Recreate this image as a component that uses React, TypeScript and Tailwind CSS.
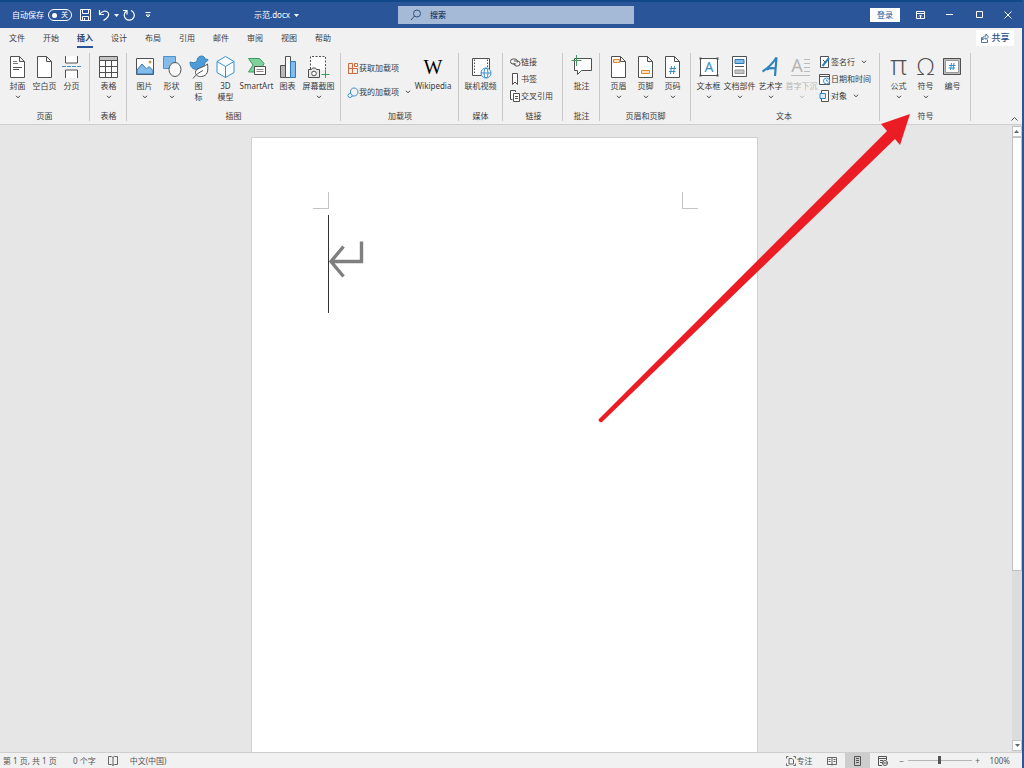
import { useState } from "react";
import type { ReactNode } from "react";

const INK = "#505050";
const BLUE = "#3a8fc9";
const SKY = "#83bcea";
const ORANGE = "#e08a2e";
const GREEN = "#3f9b5f";

function Chevron({ className = "" }: { className?: string }) {
  return (
    <svg
      viewBox="0 0 6 4"
      className={`h-1 w-1.5 shrink-0 ${className}`}
      fill="none"
      stroke="currentColor"
    >
      <path d="M1 .8l2 2 2-2" />
    </svg>
  );
}

function Caret() {
  return (
    <svg viewBox="0 0 5 3" className="h-[3px] w-[5px] shrink-0">
      <path d="M0 0h5L2.5 3z" fill="currentColor" />
    </svg>
  );
}

function BigIcon({ children }: { children: ReactNode }) {
  return (
    <svg
      viewBox="0 0 27 24"
      className="h-6 w-[27px] shrink-0 overflow-visible"
      fill="none"
      stroke={INK}
    >
      {children}
    </svg>
  );
}

function SmallIcon({ children }: { children: ReactNode }) {
  return (
    <svg
      viewBox="0 0 12 14"
      className="h-3.5 w-3 shrink-0"
      fill="none"
      stroke={INK}
    >
      {children}
    </svg>
  );
}

const Sheet = () => (
  <path d="M6.5 1.5h9l5 5v16h-14zM15.5 1.5v5h5" fill="#fff" />
);

const icons = {
  cover: (
    <BigIcon>
      <Sheet />
      <path d="M9 6.5h4M9 8.5h5" stroke="#777" />
      <path d="M9 12.5h9M9 14.5h6" />
    </BigIcon>
  ),
  blank: (
    <BigIcon>
      <Sheet />
    </BigIcon>
  ),
  pageBreak: (
    <BigIcon>
      <path d="M7.5 1v7h12V1M7.5 23v-8h12v8" fill="#fff" />
      <path d="M4 11.5h19" stroke={BLUE} strokeDasharray="4 1" />
    </BigIcon>
  ),
  table: (
    <BigIcon>
      <path d="M4.5 1.5h18v21h-18z" fill="#fff" />
      <path d="M5 2h17v3.5H5z" fill="#c4c4c4" stroke="none" />
      <path d="M4.5 5.5h18M4.5 11.5h18M4.5 17.5h18M10.5 5.5v17M16.5 5.5v17" />
    </BigIcon>
  ),
  picture: (
    <BigIcon>
      <path d="M5.5 3.5h17v16h-17z" fill="#fff" />
      <path
        d="M6 15l5-6 4.5 5 2.5-2.5 4 4V19H6z"
        fill={SKY}
        stroke="#3377b0"
      />
      <circle cx="19" cy="7" r="1" fill={ORANGE} stroke="#c98b3b" />
    </BigIcon>
  ),
  shapes: (
    <BigIcon>
      <path d="M5.5 1.5h12v12h-12z" fill={SKY} stroke="#4d93cb" />
      <ellipse cx="17" cy="14.5" rx="6" ry="7" fill="#f8f8f8" />
    </BigIcon>
  ),
  glyphs: (
    <BigIcon>
      <path
        d="M5 7c3 1 5 1 7-1 0-3 2-5 4.5-5 2 0 3.500 1.500 3.500 3l3 .5c-.5 2-2 2.5-3 2.5 0 5-4 7.5-8 7.5C8 14.5 5 12 5 7z"
        fill="#4b9cd8"
        stroke="#3b80b5"
      />
      <path d="M22.5 9c1 7 0 12-6 12.5-3 .3-6-1-6-4 0-5 7-4 12-8.500z" fill="#fff" />
      <path d="M8 23.5c3-4 6-6 10-8" />
    </BigIcon>
  ),
  cube: (
    <BigIcon>
      <path
        d="M13.5 1.5l8.5 5v11l-8.5 5-8.5-5v-11z"
        fill="#f8fcff"
        stroke={BLUE}
      />
      <path d="M5 6.5l8.5 5 8.5-5M13.5 11.5v11" stroke={BLUE} />
    </BigIcon>
  ),
  smartArt: (
    <BigIcon>
      <path
        d="M5.5 3.5h11l4.5 5-4.5 8.5h-11L10 10z"
        fill="#7fd09b"
        stroke={GREEN}
      />
      <path d="M11.5 11.5h11v8h-11z" fill="#fff" />
      <path d="M13.5 14.5h7M13.5 16.5h7" stroke="#888" />
    </BigIcon>
  ),
  chart: (
    <BigIcon>
      <path d="M6.5 10.5h5v12h-5z" fill="#b8b8b8" />
      <path d="M11.5 1.5h5v21h-5z" fill="#fff" />
      <path d="M16.5 6.5h5v16h-5z" fill={SKY} stroke="#2f7ab5" />
    </BigIcon>
  ),
  screenshot: (
    <BigIcon>
      <path d="M5.5 14V1.5h15V15" fill="#fff" strokeDasharray="2 1.5" />
      <path d="M3.5 14.5h3l1-1.5h3l1 1.5h3v8h-11z" fill="#e8e8e8" />
      <circle cx="9" cy="18.5" r="2.3" fill="#fff" />
      <path d="M20.5 15v8M16.5 19.5h8" stroke={GREEN} />
    </BigIcon>
  ),
  video: (
    <BigIcon>
      <path d="M5.5 3.5h17v17h-17z" fill="#fff" />
      <path d="M7.5 4.5v15M20.5 4.5v15" strokeDasharray="1.5 1.5" />
      <circle cx="19" cy="18" r="5" fill="#fff" stroke={BLUE} />
      <ellipse cx="19" cy="18" rx="2" ry="5" stroke={BLUE} />
      <path d="M14 18h10" stroke={BLUE} />
    </BigIcon>
  ),
  comment: (
    <BigIcon>
      <path d="M6.5 3.5h17v12h-10l-4 4v-4h-3z" fill="#fff" />
      <path d="M8.5 0v11M3.5 5.5h10" stroke={GREEN} />
    </BigIcon>
  ),
  header: (
    <BigIcon>
      <Sheet />
      <path d="M8.5 4.5h6v3h-6z" fill="#fbe2c2" stroke={ORANGE} />
    </BigIcon>
  ),
  footer: (
    <BigIcon>
      <Sheet />
      <path d="M9.5 15.5h8v3h-8z" fill="#fbe2c2" stroke={ORANGE} />
    </BigIcon>
  ),
  pageNumber: (
    <BigIcon>
      <Sheet />
      <path
        d="M12.5 11l-1 8M15.5 11l-1 8M10.500 13.500h6.500M10 16.500h6.500"
        stroke={BLUE}
      />
    </BigIcon>
  ),
  textBox: (
    <BigIcon>
      <path d="M5.5 3.5h17v17h-17z" fill="#fff" />
      <path
        d="M4.5 2.5h2v2h-2zM21.5 2.5h2v2h-2zM4.5 19.5h2v2h-2zM21.5 19.5h2v2h-2z"
        fill={INK}
        stroke="none"
      />
      <text x="14" y="17" fontSize="14" textAnchor="middle" fill={BLUE} stroke="none">
        A
      </text>
    </BigIcon>
  ),
  parts: (
    <BigIcon>
      <path d="M6.5 1.5h14v20h-14z" fill="#fff" />
      <path d="M9 4.5h9v4H9z" fill={SKY} stroke="#3377b0" />
      <path d="M9 11.5h9" />
      <path d="M9 15h9v3.5H9z" fill="#c4c4c4" stroke="#999" />
    </BigIcon>
  ),
  wordArt: (
    <BigIcon>
      <path
        d="M5.5 16.5C11 13 16 8 19.5 2.500L18 21M9.500 14.500c3-1.500 6-1.500 9-1"
        stroke="#2f83bd"
        strokeWidth="2.2"
      />
    </BigIcon>
  ),
  dropCap: (
    <BigIcon>
      <text x="9" y="17" fontSize="18" textAnchor="middle" fill="#b5b5b5" stroke="none">
        A
      </text>
      <path
        d="M16 4.5h6M16 8.5h6M16 12.5h6M16 16.5h6M3 20.5h19"
        stroke="#bbb"
      />
    </BigIcon>
  ),
  pi: (
    <BigIcon>
      <text
        x="13.5"
        y="20"
        fontSize="28"
        textAnchor="middle"
        fill={INK}
        stroke="none"
        className="font-['Open_Sans',sans-serif] font-light"
      >
        π
      </text>
    </BigIcon>
  ),
  omega: (
    <BigIcon>
      <text
        x="13.5"
        y="20"
        fontSize="24"
        textAnchor="middle"
        fill={INK}
        stroke="none"
        className="font-['Open_Sans',sans-serif] font-light"
      >
        Ω
      </text>
    </BigIcon>
  ),
  numbering: (
    <BigIcon>
      <path d="M4.5 3.5h17v16h-17z" fill="#bdbdbd" />
      <path d="M6.5 5.5h13v12h-13z" fill="#fff" stroke="#999" />
      <path
        d="M12.5 8l-1 7M15 8l-1 7M10 10.5h6.5M9.5 13H16"
        stroke={BLUE}
      />
    </BigIcon>
  ),
};

const rowIcons = {
  store: (
    <SmallIcon>
      <path
        d="M1.5 2.5h4v10h-4zM1.5 7.5h9v5h-9zM5.5 7.5v5M7.5 2.5h3v3h-3z"
        stroke="#d4693c"
      />
    </SmallIcon>
  ),
  myAddins: (
    <SmallIcon>
      <path d="M3.5 8c-.5-3 1-5 3.500-5s4 2 4 4-1.500 4-4 4H5" stroke={BLUE} />
      <circle cx="3" cy="10.5" r="2" fill="#fff" stroke={BLUE} />
    </SmallIcon>
  ),
  link: (
    <SmallIcon>
      <path d="M7 9H4a2.5 2.5 0 110-5h2a2.5 2.5 0 012.3 3.5M5 6h3.5a2.5 2.5 0 110 5H7a2.5 2.5 0 01-2-3" />
    </SmallIcon>
  ),
  bookmark: (
    <SmallIcon>
      <path d="M3.5 1.5h5v11L6 10l-2.500 2.500z" fill="#fff" />
    </SmallIcon>
  ),
  crossRef: (
    <SmallIcon>
      <path d="M6.500 3V1.500h-5v9h2" fill="#fff" />
      <path d="M4.5 4.5h6v8h-6zM6 7.5h3M6 9.5h3" fill="#fff" />
    </SmallIcon>
  ),
  signature: (
    <SmallIcon>
      <path d="M1.5 1.5h8v11h-8z" fill="#fff" />
      <path d="M3.5 11l6.500-8" stroke="#2f83bd" strokeWidth="2" />
      <path d="M4 5l2 2" />
    </SmallIcon>
  ),
  date: (
    <SmallIcon>
      <path d="M.5 2.5h10v10H.5zM.5 4.5h10" fill="#fff" />
      <circle cx="7.5" cy="9" r="3" fill="#fff" stroke={BLUE} />
      <path d="M7.5 7.5V9H9" stroke={BLUE} />
    </SmallIcon>
  ),
  object: (
    <SmallIcon>
      <path d="M2.5 1.5h7v11h-7z" fill="#fff" />
      <path d="M1 4.5h5.5v5H1z" fill="#d8ecfa" stroke="#2f83bd" />
    </SmallIcon>
  ),
};

type ToolProps = {
  icon: ReactNode;
  label: ReactNode;
  width?: string;
  menu?: boolean;
  disabled?: boolean;
};

function Tool({ icon, label, width = "w-[27px]", menu, disabled }: ToolProps) {
  return (
    <button
      type="button"
      disabled={disabled}
      className={`flex shrink-0 flex-col items-center pt-0.5 leading-[11px] whitespace-nowrap disabled:text-[#b5b5b5] ${width}`}
    >
      {icon}
      <span className="mt-px">{label}</span>
      {menu && (
        <span className="flex h-[11px] items-center">
          <Chevron />
        </span>
      )}
    </button>
  );
}

function RowTool({ icon, label, menu, tall }: ToolProps & { tall?: boolean }) {
  return (
    <button
      type="button"
      className={`flex items-center whitespace-nowrap ${tall ? "h-6" : "h-[17px]"}`}
    >
      {icon}
      <span>{label}</span>
      {menu && <Chevron className="ml-1.5" />}
    </button>
  );
}

function Group({
  label,
  pad = "px-1",
  children,
}: {
  label: string;
  pad?: string;
  children: ReactNode;
}) {
  return (
    <section
      aria-label={label}
      className={`flex h-[68px] shrink-0 flex-col justify-between border-r border-[#c8c8c8] ${pad}`}
    >
      <div className="flex items-start">{children}</div>
      <div className="text-center leading-[11px] whitespace-nowrap">{label}</div>
    </section>
  );
}

function TitleBar() {
  const [autoSave, setAutoSave] = useState(false);

  return (
    <header className="grid h-7 shrink-0 grid-cols-[1fr_236px_1fr] items-center border-t-2 border-[#10488a] bg-[#2a5699] pl-2.5 text-white">
      <div className="flex items-center justify-between pr-[99px] pl-0.5">
        <div className="flex items-center">
          <label className="flex items-center gap-1 whitespace-nowrap">
            自动保存
            <input
              type="checkbox"
              className="sr-only"
              checked={autoSave}
              onChange={(e) => setAutoSave(e.target.checked)}
            />
            <span className="flex h-3 w-6 items-center justify-between rounded-full border border-white px-[3px] text-[7px]">
              <span className="size-[5px] rounded-full bg-white" />
              {autoSave ? "开" : "关"}
            </span>
          </label>
          <button type="button" aria-label="保存" className="ml-[7px]">
            <svg viewBox="0 0 12 12" className="size-3" fill="none" stroke="#fff">
              <path d="M1.5.5h10v11h-10zM3.5.5v4h6v-4M3.5 11.5v-4h6v4M5.5 9v2" />
            </svg>
          </button>
          <button type="button" aria-label="撤消" className="ml-[7px] flex items-center gap-1">
            <svg viewBox="0 0 12 12" className="size-3" fill="none" stroke="#fff" strokeWidth="1.2">
              <path d="M1.5 1v4.5H6M1.5 5.5C4 2 8 1 10 3.5c2 3-1 6-4.5 8" />
            </svg>
            <Caret />
          </button>
          <button type="button" aria-label="恢复" className="ml-1">
            <svg viewBox="0 0 12 12" className="size-3" fill="none" stroke="#fff" strokeWidth="1.2">
              <path d="M8 1.500a5 5 0 11-4.500.5M0 1.500h4V5.500" />
            </svg>
          </button>
          <button type="button" aria-label="自定义快速访问工具栏" className="ml-2.5">
            <svg viewBox="0 0 6 6" className="size-1.5" fill="none" stroke="#fff">
              <path d="M.5.5h5M1 3l2 2 2-2z" />
            </svg>
          </button>
        </div>
        <button type="button" className="flex items-center gap-1 whitespace-nowrap">
          示范.docx
          <Caret />
        </button>
      </div>

      <label className="flex h-[18px] items-center bg-[#a4bad6] pl-3 text-[#1f3864]">
        <svg viewBox="0 0 12 12" className="size-3" fill="none" stroke="#34507c">
          <circle cx="7" cy="4.5" r="3.5" />
          <path d="M4.5 7L1 11" />
        </svg>
        <input
          type="search"
          aria-label="搜索"
          placeholder="搜索"
          className="ml-2 min-w-0 flex-1 bg-transparent font-medium outline-none placeholder:text-[#1f3864]"
        />
      </label>

      <div className="flex items-center justify-end pr-2.5">
        <button type="button" className="h-3.5 w-[30px] bg-white text-[#2a5699]">
          登录
        </button>
        <button type="button" aria-label="功能区显示选项" className="ml-4">
          <svg viewBox="0 0 9 8" className="h-2 w-[9px]" fill="none" stroke="#fff">
            <path d="M.5.5h8v7h-8zM.5 2.5h8M4.5 7V4M3 5.5L4.5 4 6 5.5" />
          </svg>
        </button>
        <button type="button" aria-label="最小化" className="ml-[21px]">
          <svg viewBox="0 0 8 8" className="size-2" stroke="#fff">
            <path d="M0 3.5h7" />
          </svg>
        </button>
        <button type="button" aria-label="最大化" className="ml-[21px]">
          <svg viewBox="0 0 8 8" className="size-2" fill="none" stroke="#fff">
            <path d="M1.5.5h6v6h-6z" />
          </svg>
        </button>
        <button type="button" aria-label="关闭" className="ml-[21px]">
          <svg viewBox="0 0 8 8" className="size-2" stroke="#fff">
            <path d="M.5.5l7 7M7.5.5l-7 7" />
          </svg>
        </button>
      </div>
    </header>
  );
}

const tabs = ["文件", "开始", "插入", "设计", "布局", "引用", "邮件", "审阅", "视图", "帮助"];

function TabRow() {
  return (
    <nav className="flex h-5 shrink-0 items-center justify-between">
      <div className="flex h-full" role="tablist">
        {tabs.map((tab) => (
          <button
            key={tab}
            type="button"
            role="tab"
            aria-selected={tab === "插入"}
            className="flex h-full w-[34px] justify-center"
          >
            <span
              className={`h-full leading-5 ${
                tab === "插入"
                  ? "border-b-2 border-[#2a5699] font-bold text-[#27406b]"
                  : ""
              }`}
            >
              {tab}
            </span>
          </button>
        ))}
      </div>
      <button
        type="button"
        className="mr-2 flex h-4 w-[38px] items-center justify-center gap-0.5 bg-white text-[9px] font-medium text-[#27508c]"
      >
        <svg viewBox="0 0 9 10" className="h-2.5 w-[9px]" fill="none" stroke="currentColor" strokeWidth=".8">
          <path d="M2.5 4.5h-1v5h6v-3M2.5 7c0-3 1-4 3.5-4V1l2.5 3L6 6.5V5C4.500 5 3.500 5.500 2.500 7z" />
        </svg>
        共享
      </button>
    </nav>
  );
}

function Ribbon() {
  return (
    <div className="flex shrink-0 items-start justify-between border-b border-[#cfcfcf] pt-[5px] pb-[3px]">
      <div className="flex">
        <Group label="页面">
          <Tool icon={icons.cover} label="封面" menu />
          <Tool icon={icons.blank} label="空白页" />
          <Tool icon={icons.pageBreak} label="分页" />
        </Group>
        <Group label="表格" pad="pl-[5px] pr-1">
          <Tool icon={icons.table} label="表格" menu />
        </Group>
        <Group label="插图">
          <Tool icon={icons.picture} label="图片" menu />
          <Tool icon={icons.shapes} label="形状" menu />
          <Tool icon={icons.glyphs} label={<>图<br />标</>} />
          <Tool icon={icons.cube} label={<>3D<br />模型</>} />
          <Tool icon={icons.smartArt} label="SmartArt" width="w-[35px]" />
          <Tool icon={icons.chart} label="图表" />
          <Tool icon={icons.screenshot} label="屏幕截图" width="w-[35px]" menu />
        </Group>
        <Group label="加载项" pad="pl-1.5 pr-[5px]">
          <div className="flex w-[66px] flex-col pt-[3px]">
            <RowTool icon={rowIcons.store} label="获取加载项" tall />
            <RowTool icon={rowIcons.myAddins} label="我的加载项" tall menu />
          </div>
          <Tool
            width="w-10"
            label="Wikipedia"
            icon={
              <span className="flex h-6 items-center font-['Liberation_Serif',serif] text-[20px] text-black">
                W
              </span>
            }
          />
        </Group>
        <Group label="媒体">
          <Tool icon={icons.video} label="联机视频" width="w-[35px]" />
        </Group>
        <Group label="链接" pad="pl-1.5 pr-1">
          <div className="flex w-[49px] flex-col">
            <RowTool icon={rowIcons.link} label="链接" />
            <RowTool icon={rowIcons.bookmark} label="书签" />
            <RowTool icon={rowIcons.crossRef} label="交叉引用" />
          </div>
        </Group>
        <Group label="批注" pad="pl-[5px] pr-1">
          <Tool icon={icons.comment} label="批注" />
        </Group>
        <Group label="页眉和页脚" pad="pl-[5px] pr-1">
          <Tool icon={icons.header} label="页眉" menu />
          <Tool icon={icons.footer} label="页脚" menu />
          <Tool icon={icons.pageNumber} label="页码" menu />
        </Group>
        <Group label="文本" pad="pl-0.5 pr-1">
          <Tool icon={icons.textBox} label="文本框" width="w-[31px]" menu />
          <Tool icon={icons.parts} label="文档部件" width="w-[31px]" menu />
          <Tool icon={icons.wordArt} label="艺术字" width="w-[31px]" menu />
          <Tool icon={icons.dropCap} label="首字下沉" width="w-[31px]" menu disabled />
          <div className="flex w-[58px] flex-col pl-0.5">
            <RowTool icon={rowIcons.signature} label="签名行" menu />
            <RowTool icon={rowIcons.date} label="日期和时间" />
            <RowTool icon={rowIcons.object} label="对象" menu />
          </div>
        </Group>
        <Group label="符号" pad="pl-[5px] pr-1">
          <Tool icon={icons.pi} label="公式" menu />
          <Tool icon={icons.omega} label="符号" menu />
          <Tool icon={icons.numbering} label="编号" />
        </Group>
      </div>
      <button type="button" aria-label="折叠功能区" className="mr-1 self-end">
        <svg viewBox="0 0 7 4" className="h-1 w-[7px]" fill="none" stroke={INK}>
          <path d="M.5 3.5l3-3 3 3" />
        </svg>
      </button>
    </div>
  );
}

function Workspace() {
  return (
    <main className="flex min-h-0 flex-1 bg-[#e6e6e6]">
      <div className="flex min-w-0 flex-1 justify-center overflow-hidden pt-3 pr-[3px]">
        <article className="w-[507px] shrink-0 border border-b-0 border-[#d0d0d0] bg-white pt-[54px]">
          <div className="flex justify-between pr-[59px] pl-[61px]">
            <div className="h-[17px] w-4 border-r border-b border-[#c4c4c4]" />
            <div className="h-[17px] w-4 border-b border-l border-[#c4c4c4]" />
          </div>
          <div className="mt-1.5 flex pl-[76px]">
            <div className="h-[98px] w-px bg-[#333]" />
            <svg
              viewBox="0 0 36 98"
              className="h-[98px] w-9"
              fill="none"
              stroke="#7f7f7f"
              strokeWidth="3.4"
            >
              <path d="M32.5 26.5v20H2M14.5 31.5L2 46.5l12.5 15" />
            </svg>
          </div>
        </article>
      </div>
      <div className="flex w-2.5 shrink-0 flex-col bg-[#dcdcdc] py-px text-[#666]">
        <button
          type="button"
          aria-label="向上滚动"
          className="flex h-[11px] rotate-180 items-center justify-center border border-[#c6c6c6] bg-white"
        >
          <Caret />
        </button>
        <div className="flex-1">
          <div className="h-[72%] border border-[#c0c0c0] bg-white" />
        </div>
        <button
          type="button"
          aria-label="向下滚动"
          className="flex h-[11px] items-center justify-center border border-[#c6c6c6] bg-white"
        >
          <Caret />
        </button>
      </div>
    </main>
  );
}

function StatusBar() {
  return (
    <footer className="flex h-4 shrink-0 items-center justify-between border-t border-[#cfcfcf] pr-3 pl-[3px] whitespace-nowrap text-[#555]">
      <div className="flex items-center gap-3">
        <span className="min-w-[58px]">第 1 页, 共 1 页</span>
        <span>0 个字</span>
        <button type="button" aria-label="校对">
          <svg viewBox="0 0 10 10" className="size-2.5" fill="none" stroke="#666">
            <path d="M.5.5h3L5 1.500 6.500.5h3v8h-3L5 9.500l-1.500-1h-3zM5 1.500v8" />
          </svg>
        </button>
        <span>中文(中国)</span>
      </div>
      <div className="flex h-full items-center">
        <button type="button" className="flex items-center gap-px">
          <svg viewBox="0 0 10 10" className="size-2.5" fill="none" stroke="#666">
            <path d="M.5 2.5v-2h2M.5 7.5v2h2M7.5.5h2v2M7.5 9.5h2v-2M3 2.5h3l1.500 1.500v4H3z" />
          </svg>
          专注
        </button>
        <button type="button" aria-label="阅读视图" className="ml-3.5">
          <svg viewBox="0 0 10 10" className="size-2.5" fill="none" stroke="#666">
            <path d="M.5 1.5h9v7h-9zM5 1.5v8M1.5 3.5h2M1.5 5.5h2M6.5 3.5h2M6.5 5.5h2" />
          </svg>
        </button>
        <button
          type="button"
          aria-label="页面视图"
          className="ml-2 flex h-full w-[25px] items-center justify-center bg-[#cdcdcd]"
        >
          <svg viewBox="0 0 9 10" className="h-2.5 w-[9px]" fill="none" stroke="#555">
            <path d="M1.5.5h6v9h-6zM3 2.5h3M3 4.5h3M3 6.5h3" />
          </svg>
        </button>
        <button type="button" aria-label="Web 版式视图" className="ml-2">
          <svg viewBox="0 0 10 10" className="size-2.5" fill="none" stroke="#555">
            <path d="M8.5 4V.5h-8v9H4M.5 2.5h8M2 4.5h3M2 6.5h2" />
            <circle cx="7" cy="7" r="2.5" />
            <path d="M4.5 7h5" />
          </svg>
        </button>
        <button type="button" aria-label="缩小" className="ml-2.5 w-2">
          −
        </button>
        <input
          type="range"
          aria-label="显示比例"
          min={0}
          max={100}
          defaultValue={50}
          className="mx-0.5 h-2 w-16 appearance-none bg-transparent [&::-webkit-slider-runnable-track]:h-px [&::-webkit-slider-runnable-track]:bg-[#b5b5b5] [&::-webkit-slider-thumb]:-mt-1 [&::-webkit-slider-thumb]:h-2 [&::-webkit-slider-thumb]:w-[3px] [&::-webkit-slider-thumb]:appearance-none [&::-webkit-slider-thumb]:bg-[#555]"
        />
        <button type="button" aria-label="放大" className="w-2">
          +
        </button>
        <span className="ml-2">100%</span>
      </div>
    </footer>
  );
}

export default function App() {
  return (
    <div
      lang="zh-CN"
      className="relative flex h-screen flex-col overflow-hidden border-r-2 border-[#2a5699] bg-[#f1f1f1] font-['Noto_Sans','Noto_Sans_CJK_SC',sans-serif] text-[8px] text-[#3b3b3b]"
    >
      <TitleBar />
      <TabRow />
      <Ribbon />
      <Workspace />
      <StatusBar />

      {/* callout arrow pointing at the symbols group */}
      <svg
        viewBox="0 0 314 310"
        className="pointer-events-none absolute top-[113px] left-[597px] h-[310px] w-[314px]"
        fill="#ec1c24"
      >
        <path d="M313 1l-10 31-5-6L5 309q-2 1-3-1t0-2L290 18l-6-7z" />
      </svg>
    </div>
  );
}
